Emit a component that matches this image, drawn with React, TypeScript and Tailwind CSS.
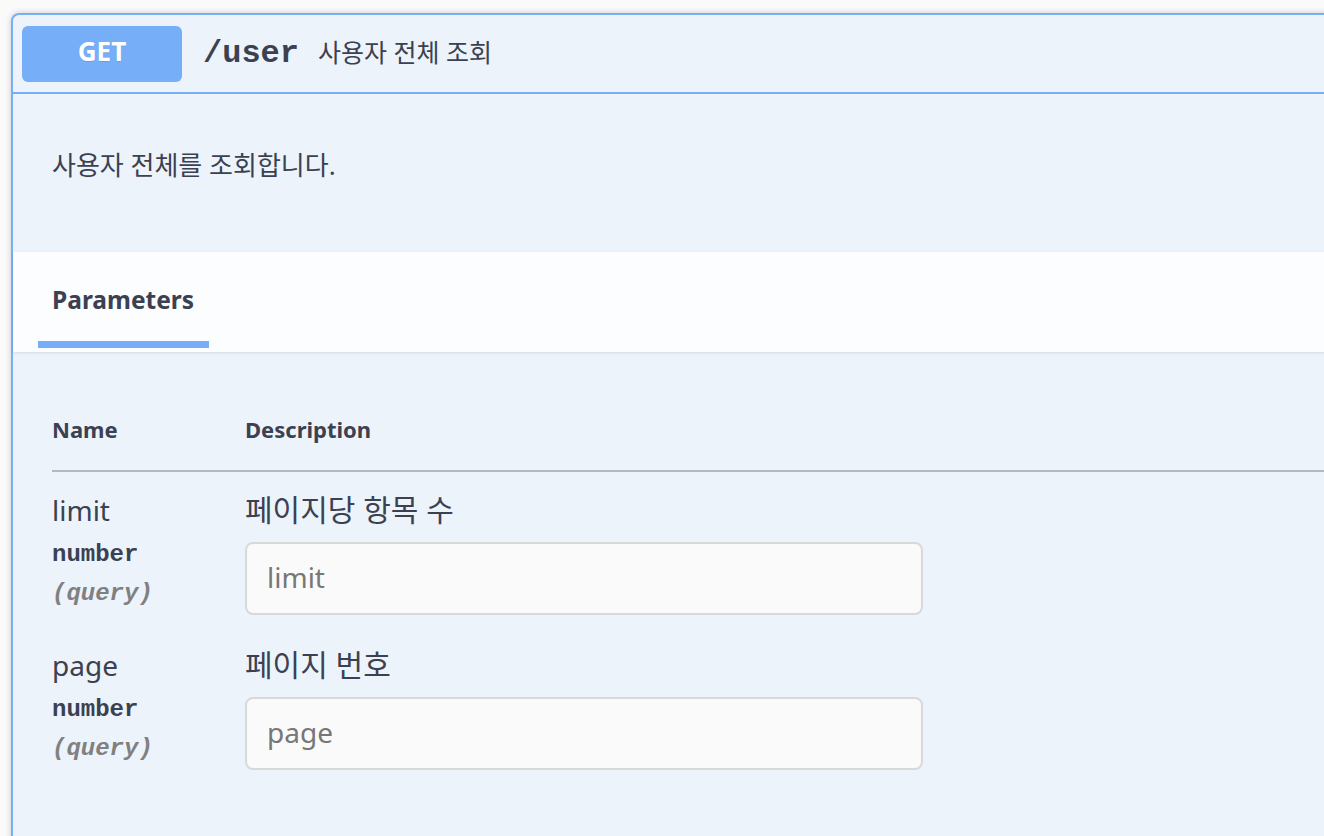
import React from "react";

const sans = { fontFamily: '"Noto Sans", "Noto Sans CJK KR", sans-serif' };
const mono = { fontFamily: '"Liberation Mono", "DejaVu Sans Mono", monospace' };

function ParamRow({ name, desc, placeholder }: { name: string; desc: string; placeholder: string }) {
  return (
    <div className="flex pt-[20px] pb-[12px]">
      <div className="w-[193px] shrink-0">
        <div className="text-[28px] leading-[36px] text-[#3b4151]">{name}</div>
        <div className="text-[24px] leading-[30px] font-bold text-[#3b4151] pt-[12px] pb-[10px]" style={mono}>
          number
        </div>
        <div className="text-[24px] leading-[28px] font-bold italic text-[#808080]" style={mono}>
          (query)
        </div>
      </div>
      <div className="flex flex-col">
        <div className="text-[30px] leading-[36px] text-[#3b4151]">{desc}</div>
        <input
          readOnly
          placeholder={placeholder}
          className="mt-[14px] w-[678px] h-[73px] border-2 border-[#d9d9d9] rounded-[8px] bg-[#fafafa] pl-[20px] pb-[3px] text-[28px] text-[#3b4151] placeholder:text-[#777777] outline-none"
          style={sans}
        />
      </div>
    </div>
  );
}

export default function App() {
  return (
    <div className="w-[1324px] h-[836px] overflow-hidden bg-[#fafafa] pl-[11px] pt-[13px]" style={sans}>
      <div className="w-[1400px] h-[900px] border-2 border-[#76aef7] rounded-[8px] bg-[#ecf3fb] shadow-[0_0_6px_rgba(0,0,0,0.19)]">
        {/* Summary header */}
        <div className="flex items-center h-[79px] pl-[9px] border-b-2 border-[#76aef7]">
          <div className="w-[160px] h-[56px] rounded-[6px] bg-[#76aef7] flex items-center justify-center pb-[4px] text-white font-bold text-[26px] [text-shadow:0_1px_0_rgba(0,0,0,0.1)]">
            GET
          </div>
          <span className="ml-[21px] text-[32px] font-bold text-[#3b4151] leading-none" style={mono}>
            /user
          </span>
          <span className="ml-[19px] text-[25px] text-[#3b4151] leading-none pb-[2px]">사용자 전체 조회</span>
        </div>

        {/* Description */}
        <div className="h-[158px] pl-[39px] pt-[53px]">
          <p className="text-[26px] leading-[36px] text-[#3b4151]">사용자 전체를 조회합니다.</p>
        </div>

        {/* Section header */}
        <div className="h-[100px] bg-white/85 shadow-[0_1px_3px_rgba(0,0,0,0.1)] pl-[39px] pt-[32px] relative">
          <div className="relative inline-block">
            <h4 className="text-[24.5px] leading-[32px] font-bold text-[#3b4151]">Parameters</h4>
            <div className="absolute left-[-14px] right-[-15px] top-[57px] h-[7px] bg-[#76aef7]" />
          </div>
        </div>

        {/* Table */}
        <div className="pl-[39px] pt-[40px]">
          <div className="flex pt-[23px] pb-[27px] border-b-2 border-[#b3b8c1] text-[22px] leading-[28px] font-bold text-[#3b4151]">
            <div className="w-[193px]">Name</div>
            <div>Description</div>
          </div>
          <ParamRow name="limit" desc="페이지당 항목 수" placeholder="limit" />
          <ParamRow name="page" desc="페이지 번호" placeholder="page" />
        </div>
      </div>
    </div>
  );
}
